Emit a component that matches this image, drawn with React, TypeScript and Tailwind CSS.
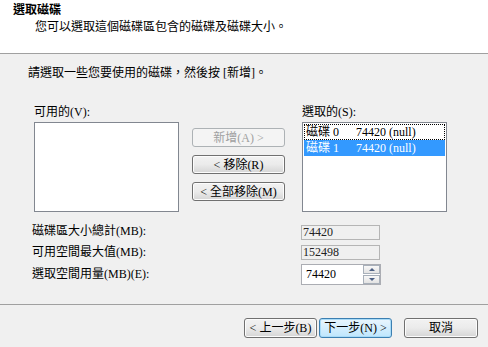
import React from "react";

const FONT = { fontFamily: '"Liberation Serif", "Noto Sans CJK TC", serif' };

function Btn({ children, disabled, def, className = "" }: { children: React.ReactNode; disabled?: boolean; def?: boolean; className?: string }) {
  if (disabled) {
    return (
      <div className={`flex items-center justify-center h-[19px] rounded-[3px] border border-[#adb2b5] bg-[#f4f4f4] text-[#a0a0a0] ${className}`}>
        {children}
      </div>
    );
  }
  if (def) {
    return (
      <div className={`flex items-center justify-center h-[19px] rounded-[3px] border border-[#3c7fb1] bg-gradient-to-b from-[#eaf6fd] to-[#bee6fd] text-black shadow-[inset_0_0_0_1px_#a8dbf8] ${className}`}>
        {children}
      </div>
    );
  }
  return (
    <div className={`flex items-center justify-center h-[19px] rounded-[3px] border border-[#707070] bg-gradient-to-b from-[#f2f2f2] via-[#ebebeb] to-[#d5d5d5] text-black shadow-[inset_0_0_0_1px_#fcfcfc] ${className}`}>
      {children}
    </div>
  );
}

export default function App() {
  return (
    <div className="w-[488px] h-[347px] bg-[#f0f0f0] flex flex-col text-[12px] leading-[16px] text-black overflow-hidden" style={FONT}>
      <div className="h-[54px] bg-white border-b border-[#a0a0a0] shrink-0">
        <div className="pl-[13px] pt-[2px] font-bold">選取磁碟</div>
        <div className="pl-[35px] pt-[1px]">您可以選取這個磁碟區包含的磁碟及磁碟大小。</div>
      </div>
      <div className="h-[250px] shrink-0 flex flex-col">
        <div className="mt-[11px] ml-[28px]">請選取一些您要使用的磁碟，然後按 [新增]。</div>
        <div className="mt-[23px] ml-[34px] flex">
          <div className="flex flex-col">
            <div className="h-[18px]">可用的(V):</div>
            <div className="w-[145px] h-[90px] bg-white border border-[#828790]" />
          </div>
          <div className="ml-[13px] pt-[24px] flex flex-col gap-[8px]">
            <Btn disabled className="w-[93px]">新增(A) &gt;</Btn>
            <Btn className="w-[93px]">&lt; 移除(R)</Btn>
            <Btn className="w-[93px]">&lt; 全部移除(M)</Btn>
          </div>
          <div className="ml-[17px] flex flex-col">
            <div className="h-[18px]">選取的(S):</div>
            <div className="w-[145px] h-[90px] bg-white border border-[#828790] p-[1px] flex flex-col">
              <div className="h-[16px] border border-dotted border-black flex items-center">
                <span className="w-[51px] pl-[1px]">磁碟 0</span>
                <span>74420 (null)</span>
              </div>
              <div className="h-[16px] bg-[#3399ff] text-white flex items-center">
                <span className="w-[52px] pl-[2px]">磁碟 1</span>
                <span>74420 (null)</span>
              </div>
            </div>
          </div>
        </div>
        <div className="mt-[10px] ml-[32px] flex flex-col">
          <div className="h-[20px] flex items-center">
            <span className="w-[269px] -mt-[2px]">磁碟區大小總計(MB):</span>
            <div className="w-[79px] h-[15px] border border-[#b5b5b5] flex items-center pl-[1px] text-[#222]">74420</div>
          </div>
          <div className="h-[20px] flex items-center">
            <span className="w-[269px] -mt-[1px]">可用空間最大值(MB):</span>
            <div className="w-[79px] h-[15px] border border-[#b5b5b5] flex items-center pl-[1px] text-[#222]">152498</div>
          </div>
          <div className="h-[24px] flex items-center">
            <span className="w-[269px]">選取空間用量(MB)(E):</span>
            <div className="w-[80px] h-[21px] bg-white border border-[#abadb3] flex items-center">
              <span className="flex-1 pl-[4px]">74420</span>
              <div className="w-[17px] h-[19px] flex flex-col">
                <div className="h-[9px] border border-[#a8b0ba] bg-gradient-to-b from-[#f8f8f8] to-[#e3e3e3] flex items-center justify-center">
                  <svg width="6" height="3" viewBox="0 0 6 3"><path d="M0 3 L3 0 L6 3 Z" fill="#4d6185" /></svg>
                </div>
                <div className="h-[9px] mt-[1px] border border-[#a8b0ba] bg-gradient-to-b from-[#f8f8f8] to-[#e3e3e3] flex items-center justify-center">
                  <svg width="6" height="3" viewBox="0 0 6 3"><path d="M0 0 L6 0 L3 3 Z" fill="#4d6185" /></svg>
                </div>
              </div>
            </div>
          </div>
        </div>
      </div>
      <div className="flex-1 border-t border-[#a0a0a0] flex justify-end items-start pt-[13px] pr-[10px]">
        <Btn className="w-[73px] h-[20px]">&lt; 上一步(B)</Btn>
        <Btn def className="w-[73px] h-[20px] ml-[2px]">下一步(N) &gt;</Btn>
        <Btn className="w-[74px] h-[20px] ml-[12px]">取消</Btn>
      </div>
    </div>
  );
}
